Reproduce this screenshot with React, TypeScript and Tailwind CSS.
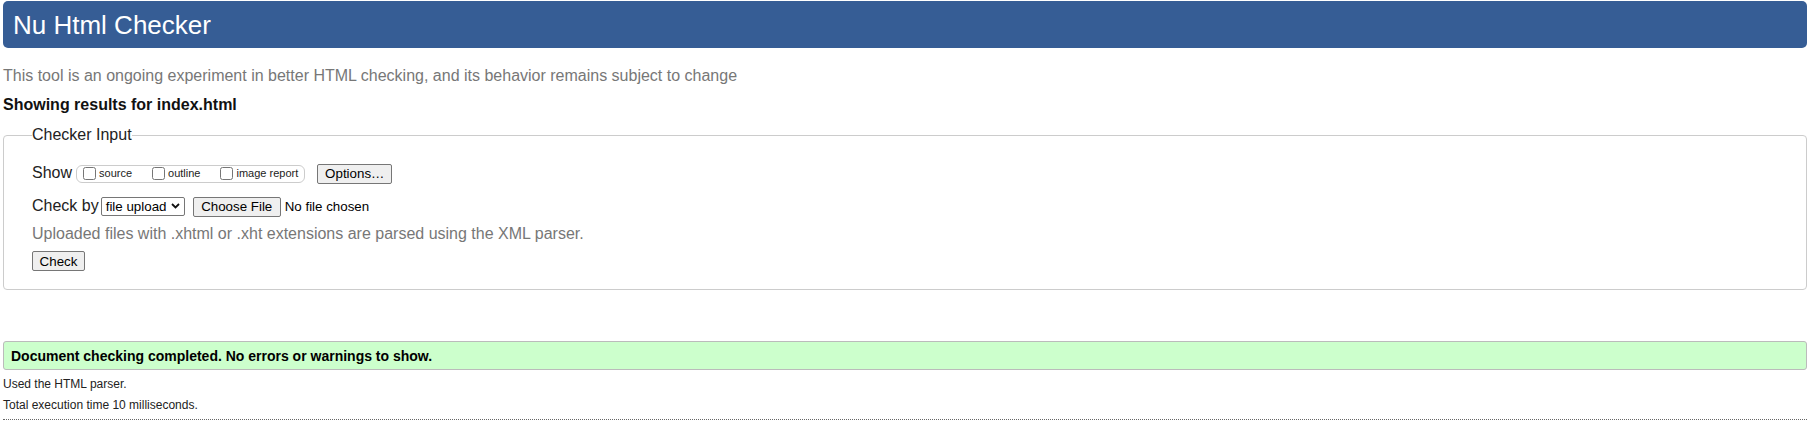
import React from 'react';

const Btn: React.FC<{ label: string; width: string }> = ({ label, width }) => (
  <button
    type="button"
    className={`inline-flex h-[20px] shrink-0 items-center justify-center rounded-[2px] border border-[#767676] bg-[#efefef] text-[13.33px] leading-[15px] text-black ${width}`}
  >
    {label}
  </button>
);

const ShowOption: React.FC<{ label: string }> = ({ label }) => (
  <label className="flex items-center">
    <input type="checkbox" className="m-0 h-[13px] w-[13px]" />
    <span className="ml-[3px] text-[11px] leading-[13px]">{label}</span>
  </label>
);

const App: React.FC = () => {
  return (
    <div className="bg-white pl-[3px] pr-[10px] pt-px font-['Liberation_Sans',Arial,sans-serif] text-[#222]">
      <h1 className="flex h-[47px] items-center rounded-[5px] bg-[#365d95] pl-[10px] text-[26px] font-normal leading-[30px] text-white">
        Nu Html Checker
      </h1>

      <p className="mt-[19px] text-[16px] leading-[18px] text-[#777]">
        This tool is an ongoing experiment in better HTML checking, and its behavior remains subject to change
      </p>

      <p className="mt-[11px] text-[16px] font-bold leading-[18px] text-[#111]">
        Showing results for index.html
      </p>

      <fieldset className="mt-[12px] rounded-[4px] border border-[#cccccc] pb-[18px] pl-[28px] pr-[28px] pt-[19px]">
        <legend className="px-0 text-[16px] leading-[18px] text-[#222]">Checker Input</legend>

        {/* show row */}
        <div className="flex h-[20px] items-center">
          <span className="text-[16px] leading-[18px]">Show</span>
          <div className="ml-[4px] mt-[2px] flex h-[18px] items-center gap-[20px] rounded-[6px] border border-[#cccccc] pb-[2px] pl-[6px] pr-[6px]">
            <ShowOption label="source" />
            <ShowOption label="outline" />
            <ShowOption label="image report" />
          </div>
          <div className="ml-[12px]">
            <Btn label="Options…" width="w-[75px]" />
          </div>
        </div>

        {/* check by row */}
        <div className="mt-[13px] flex h-[20px] items-center">
          <span className="text-[16px] leading-[18px]">Check by</span>
          <div className="ml-[2px] flex h-[19px] w-[84px] items-center justify-between rounded-[2px] border border-[#767676] bg-white pl-[4px] pr-[4px] text-[13.33px] leading-[15px] text-black">
            <span>file upload</span>
            <svg width="9" height="6" viewBox="0 0 9 6" fill="none">
              <path d="M1 1l3.5 3.5L8 1" stroke="#111" strokeWidth="1.8" />
            </svg>
          </div>
          <div className="ml-[8px]">
            <Btn label="Choose File" width="w-[88px]" />
          </div>
          <span className="ml-[4px] text-[13.33px] leading-[15px] text-black">No file chosen</span>
        </div>

        <p className="mt-[9px] text-[16px] leading-[18px] text-[#777]">
          Uploaded files with .xhtml or .xht extensions are parsed using the XML parser.
        </p>

        <div className="mt-[8px] flex">
          <Btn label="Check" width="w-[53px]" />
        </div>
      </fieldset>

      <div className="mt-[51px] flex h-[29px] items-center rounded-[3px] border border-[#bbbbbb] bg-[#ccffcc] px-[7px]">
        <p className="text-[14px] font-bold leading-[16px] text-black">
          Document checking completed. No errors or warnings to show.
        </p>
      </div>

      <p className="mt-[7px] text-[12px] leading-[14px] text-[#222]">Used the HTML parser.</p>
      <p className="mt-[7px] text-[12px] leading-[14px] text-[#222]">Total execution time 10 milliseconds.</p>

      <div className="mt-[7px] border-t border-dotted border-[#666]" />
    </div>
  );
};

export default App;
